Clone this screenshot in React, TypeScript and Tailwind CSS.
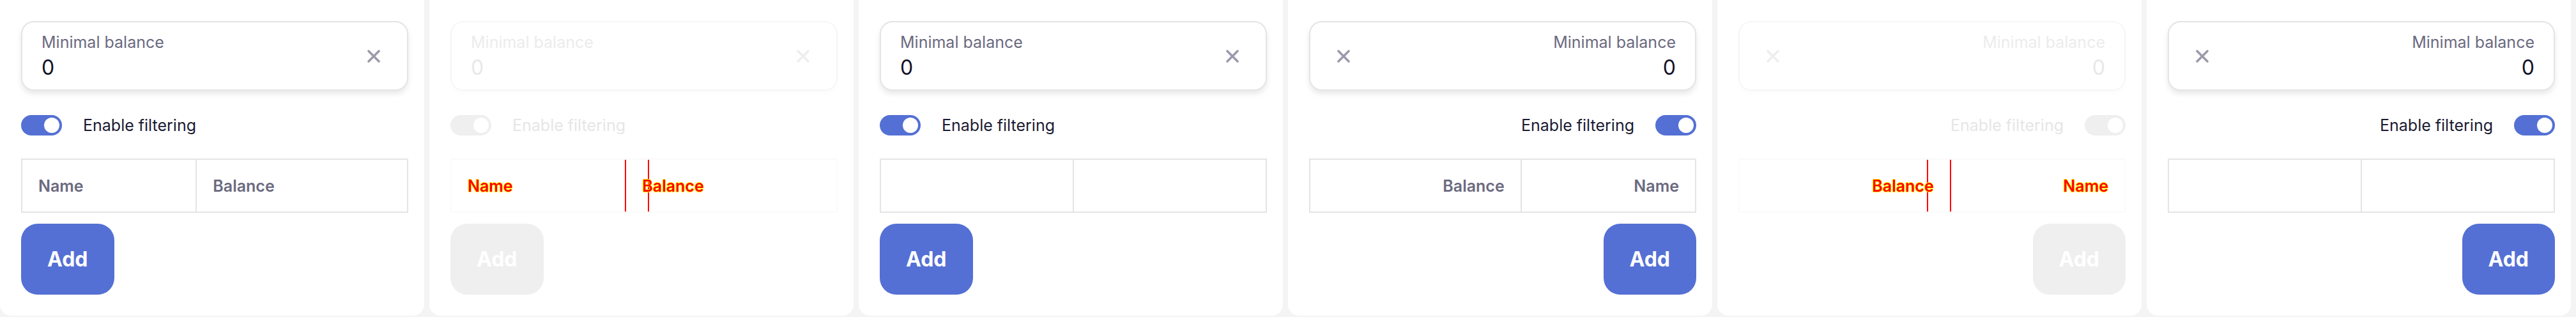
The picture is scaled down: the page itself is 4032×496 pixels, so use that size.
import React from "react";

type PanelProps = {
  rtl?: boolean;
  disabled?: boolean;
  headers?: boolean;
};

function XIcon({ color }: { color: string }) {
  return (
    <svg width="20" height="20" viewBox="0 0 20 20" fill="none">
      <path d="M2 2 L18 18 M18 2 L2 18" stroke={color} strokeWidth="3.6" strokeLinecap="round" />
    </svg>
  );
}

function Panel({ rtl = false, disabled = false, headers = true }: PanelProps) {
  const thBase =
    "relative border-2 px-[25px] py-0 text-start text-[25px] leading-[30px] font-semibold ";
  const thColor = disabled
    ? "border-[#fafafa] text-[#ff0000] [text-shadow:1px_0_0_#ffff00,-1px_0_0_#ffff00,0_1px_0_#ffff00,0_-1px_0_#ffff00]"
    : "border-[#e4e4e6] text-[#6b6a80]";
  return (
    <div className="w-[672px] shrink-0 h-[496px]">
      <div
        dir={rtl ? "rtl" : "ltr"}
        className="h-[494px] w-[664px] bg-white rounded-b-[18px] pt-[33px] pl-[33px] pr-[25px]"
      >
        <div className="flex flex-col w-[606px]">
          {/* Input */}
          <div
            className={
              "h-[109px] rounded-[20px] border-2 flex items-center ps-[30px] pe-[42px] " +
              (disabled
                ? "border-[#f6f6f6] shadow-[0_4px_8px_rgba(0,0,0,0.015)]"
                : "border-[#e4e4e6] shadow-[0_5px_8px_rgba(0,0,0,0.09)]")
            }
          >
            <div className="flex-1 flex flex-col gap-[6px]">
              <span
                className={
                  "text-[25px] leading-[30px] " +
                  (disabled ? "text-[#ececec]" : "text-[#6b6a80]")
                }
              >
                Minimal balance
              </span>
              <span
                className={
                  "text-[32px] leading-[38px] " +
                  (disabled ? "text-[#e8e8e8]" : "text-[#131328]")
                }
              >
                0
              </span>
            </div>
            <XIcon color={disabled ? "#eeeeee" : "#9c9aaa"} />
          </div>

          {/* Toggle row */}
          <div className="mt-[38px] flex items-center gap-[33px] h-[32px]">
            <div
              dir="ltr"
              className={
                "w-[64px] h-[32px] rounded-full flex items-center justify-end px-[4px] " +
                (disabled ? "bg-[#efefef]" : "bg-[#5470d4]")
              }
            >
              <div className="w-[24px] h-[24px] rounded-full bg-white" />
            </div>
            <span
              className={
                "text-[25px] leading-[30px] " +
                (disabled ? "text-[#e6e6e6]" : "text-[#1c1b33]")
              }
            >
              Enable filtering
            </span>
          </div>

          {/* Table */}
          <table
            className={
              "mt-[36px] w-full border-collapse border-2 " +
              (disabled ? "border-[#fafafa]" : "border-[#e4e4e6]")
            }
          >
            <thead>
              <tr className="h-[83px]">
                <th className={thBase + thColor}>{headers ? "Name" : ""}</th>
                <th className={thBase + thColor}>
                  {disabled && (
                    <>
                      <span className="absolute top-0 bottom-0 start-[-2px] w-[2px] bg-[#ff0000]" />
                      <span className="absolute top-0 bottom-0 start-[34px] w-[2px] bg-[#ff0000]" />
                    </>
                  )}
                  <span className="relative">{headers ? "Balance" : ""}</span>
                </th>
              </tr>
            </thead>
          </table>

          {/* Button */}
          <div className="mt-[17px] flex">
            <button
              className={
                "h-[111px] px-[41px] rounded-[26px] text-[32px] leading-[38px] font-bold text-white " +
                (disabled ? "bg-[#efefef]" : "bg-[#5470d4]")
              }
            >
              Add
            </button>
          </div>
        </div>
      </div>
    </div>
  );
}

export default function App() {
  return (
    <div
      className="w-[4032px] h-[496px] bg-[#f4f4f5] flex overflow-hidden"
      style={{ fontFamily: "Inter, 'Noto Sans', sans-serif" }}
    >
      <Panel />
      <Panel disabled />
      <Panel headers={false} />
      <Panel rtl />
      <Panel rtl disabled />
      <Panel rtl headers={false} />
    </div>
  );
}
